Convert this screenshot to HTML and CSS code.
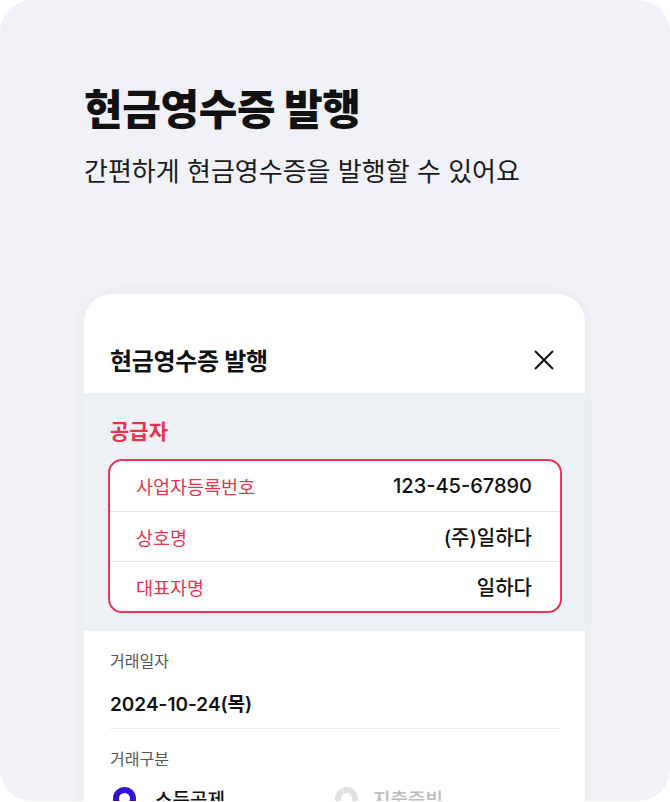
FILE: index.html
```html
<!DOCTYPE html>
<html lang="ko">
<head>
    <meta charset="UTF-8">
    <meta name="viewport" content="width=device-width, initial-scale=1.0">
    <title>현금영수증 발행</title>
    <link rel="stylesheet" href="styles.css">
</head>
<body>

<div class="frame">
    <div class="intro">
        <h1 class="title">현금영수증 발행</h1>
        <p class="desc">간편하게 현금영수증을 발행할 수 있어요</p>
    </div>

    <div class="sheet">
        <div class="sheet-head">
            <h2>현금영수증 발행</h2>
            <svg class="close" width="24" height="24" viewBox="0 0 24 24">
                <path d="M3 3 L21 21 M21 3 L3 21" stroke="#111" stroke-width="2" fill="none"/>
            </svg>
        </div>

        <div class="supplier">
            <h3>공급자</h3>
            <ul class="supplier-box">
                <li><span class="label">사업자등록번호</span><span class="value">123-45-67890</span></li>
                <li><span class="label">상호명</span><span class="value">(주)일하다</span></li>
                <li><span class="label">대표자명</span><span class="value">일하다</span></li>
            </ul>
        </div>

        <div class="form">
            <div class="field">
                <div class="field-label">거래일자</div>
                <div class="field-value">2024-10-24(목)</div>
            </div>
            <div class="field field-last">
                <div class="field-label">거래구분</div>
                <div class="radios">
                    <label class="radio on"><i></i>소득공제</label>
                    <label class="radio"><i></i>지출증빙</label>
                </div>
            </div>
        </div>
    </div>
</div>

</body>
</html>
```

FILE: styles.css
```css
* {
    margin: 0;
    padding: 0;
    box-sizing: border-box;
}

body {
    background: #fff;
    font-family: Inter, "Noto Sans CJK KR", sans-serif;
    color: #111;
}

li {
    list-style: none;
}

.frame {
    width: 670px;
    height: 801px;
    border-radius: 32px;
    background-color: #f1f2f7;
    overflow: hidden;
    padding: 0 85px 0 84px;
}

.intro {
    padding-top: 80px;
    height: 294px;
}

.title {
    font-size: 42px;
    font-weight: 800;
    line-height: 60px;
    letter-spacing: -0.4px;
}

.desc {
    margin-top: 13px;
    font-size: 26px;
    line-height: 38px;
    color: #1b1b1b;
}

.sheet {
    background: #fff;
    border-radius: 28px 28px 0 0;
    box-shadow: 0 0 16px rgba(40, 50, 90, 0.06);
    min-height: 520px;
}

.sheet-head {
    display: flex;
    justify-content: space-between;
    align-items: center;
    height: 99px;
    padding: 32px 29px 0 26px;
}

.sheet-head h2 {
    font-size: 24px;
    font-weight: 700;
    letter-spacing: -0.3px;
}

.supplier {
    background: #edf1f6;
    padding: 22px 23px 18px 24px;
}

.supplier h3 {
    color: #e8344e;
    font-size: 21px;
    font-weight: 700;
    line-height: 34px;
    margin: 0 0 10px 2px;
}

.supplier-box {
    background: #fff;
    border: 2px solid #e8384f;
    border-radius: 14px;
}

.supplier-box li {
    display: flex;
    justify-content: space-between;
    align-items: center;
    height: 50px;
    padding: 0 28px 0 26px;
    border-top: 1px solid #e3e4e8;
}

.supplier-box li:first-child {
    border-top: none;
}

.label {
    color: #e8344e;
    font-size: 18.5px;
}

.value {
    font-size: 20px;
    font-weight: 500;
    color: #111;
}

.form {
    padding: 18px 25px 0 26px;
}

.field {
    border-bottom: 1px solid #ececef;
    padding-bottom: 9px;
}

.field-last {
    border-bottom: none;
    padding-top: 18px;
}

.field-label {
    font-size: 16px;
    color: #555;
    line-height: 24px;
}

.field-value {
    margin-top: 18px;
    font-size: 19px;
    font-weight: 600;
    line-height: 28px;
}

.radios {
    display: flex;
    margin-top: 14px;
}

.radio {
    display: flex;
    align-items: center;
    width: 222px;
    font-size: 19px;
    font-weight: 500;
    color: #bbb;
}

.radio.on {
    color: #111;
}

.radio i {
    width: 23px;
    height: 23px;
    border-radius: 50%;
    border: 6px solid #e2e2e6;
    background: #fff;
    margin: 0 15px 0 3px;
}

.radio.on i {
    border-color: #3413d6;
    margin-right: 19px;
}
```
